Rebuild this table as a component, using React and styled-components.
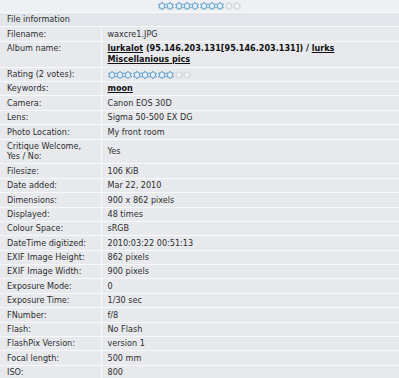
import React from 'react';
import styled, { createGlobalStyle } from 'styled-components';

const GlobalStyle = createGlobalStyle`
  body {
    margin: 0;
    background: #eef0f3;
    font-family: 'DejaVu Sans Condensed', 'DejaVu Sans', sans-serif;
    font-size: 9px;
    color: #2e2e2e;
  }
`;

const Page = styled.div`
  width: 399px;
  height: 378px;
  overflow: hidden;
  background: #eef0f3;
`;

const TopBar = styled.div`
  height: 12px;
  display: flex;
  align-items: center;
  justify-content: center;
  border-bottom: 1px solid #fafbfc;
`;

const Stars = styled.span`
  display: inline-flex;
  gap: 0.4px;
  vertical-align: middle;
`;

const Table = styled.table`
  width: 100%;
  border-collapse: collapse;
  table-layout: fixed;
`;

const HeadCell = styled.th`
  text-align: left;
  font-weight: normal;
  background: #e2e5e9;
  padding: 1.45px 7px;
  line-height: 10.5px;
  border-bottom: 1px solid #f8f9fa;
`;

const Label = styled.td`
  width: 87px;
  padding: 1.45px 7px;
  line-height: 10.5px;
  background: #e7e9ed;
  border-bottom: 1px solid #f8f9fa;
  border-right: 1px solid #f8f9fa;
  vertical-align: ${(p) => (p.$top ? 'top' : 'middle')};
`;

const Value = styled.td`
  padding: 1.45px 6px;
  line-height: ${(p) => (p.$tall ? '11px' : '10.5px')};
  background: #e7e9ed;
  border-bottom: 1px solid #f8f9fa;
  vertical-align: middle;
`;

const Link = styled.a`
  color: #111;
  font-weight: bold;
  text-decoration: underline;
`;

const Bold = styled.b`
  color: #111;
`;

function Star({ on }) {
  const pts = [];
  for (let i = 0; i < 12; i++) {
    const r = i % 2 === 0 ? 3.8 : 2.4;
    const a = (Math.PI / 6) * i - Math.PI / 2;
    pts.push(`${(4 + r * Math.cos(a)).toFixed(2)},${(4 + r * Math.sin(a)).toFixed(2)}`);
  }
  return (
    <svg width="8" height="8" viewBox="0 0 8 8">
      <polygon
        points={pts.join(' ')}
        fill={on ? '#e4f0f7' : '#f1f2f4'}
        stroke={on ? '#4a8fc0' : '#c9cdd2'}
        strokeWidth="0.9"
        strokeLinejoin="round"
      />
    </svg>
  );
}

function Rating({ value }) {
  return (
    <Stars>
      {Array.from({ length: 10 }, (_, i) => (
        <Star key={i} on={i < value} />
      ))}
    </Stars>
  );
}

const rows = [
  ['Filesize:', '106 KiB'],
  ['Date added:', 'Mar 22, 2010'],
  ['Dimensions:', '900 x 862 pixels'],
  ['Displayed:', '48 times'],
  ['Colour Space:', 'sRGB'],
  ['DateTime digitized:', '2010:03:22 00:51:13'],
  ['EXIF Image Height:', '862 pixels'],
  ['EXIF Image Width:', '900 pixels'],
  ['Exposure Mode:', '0'],
  ['Exposure Time:', '1/30 sec'],
  ['FNumber:', 'f/8'],
  ['Flash:', 'No Flash'],
  ['FlashPix Version:', 'version 1'],
  ['Focal length:', '500 mm'],
  ['ISO:', '800'],
];

export default function App() {
  return (
    <Page>
      <GlobalStyle />
      <TopBar>
        <Rating value={8} />
      </TopBar>
      <Table>
        <colgroup>
          <col style={{ width: '101px' }} />
          <col />
        </colgroup>
        <thead>
          <tr>
            <HeadCell colSpan={2}>File information</HeadCell>
          </tr>
        </thead>
        <tbody>
          <tr>
            <Label>Filename:</Label>
            <Value>waxcre1.JPG</Value>
          </tr>
          <tr>
            <Label $top>Album name:</Label>
            <Value $tall>
              <Link href="#">lurkalot</Link>
              <Bold> (95.146.203.131[95.146.203.131]) / </Bold>
              <Link href="#">lurks Miscellanious pics</Link>
            </Value>
          </tr>
          <tr>
            <Label>Rating (2 votes):</Label>
            <Value>
              <Rating value={8} />
            </Value>
          </tr>
          <tr>
            <Label>Keywords:</Label>
            <Value>
              <Link href="#">moon</Link>
            </Value>
          </tr>
          <tr>
            <Label>Camera:</Label>
            <Value>Canon EOS 30D</Value>
          </tr>
          <tr>
            <Label>Lens:</Label>
            <Value>Sigma 50-500 EX DG</Value>
          </tr>
          <tr>
            <Label>Photo Location:</Label>
            <Value>My front room</Value>
          </tr>
          <tr>
            <Label>Critique Welcome, Yes / No:</Label>
            <Value>Yes</Value>
          </tr>
          {rows.map(([k, v]) => (
            <tr key={k}>
              <Label>{k}</Label>
              <Value>{v}</Value>
            </tr>
          ))}
        </tbody>
      </Table>
    </Page>
  );
}
